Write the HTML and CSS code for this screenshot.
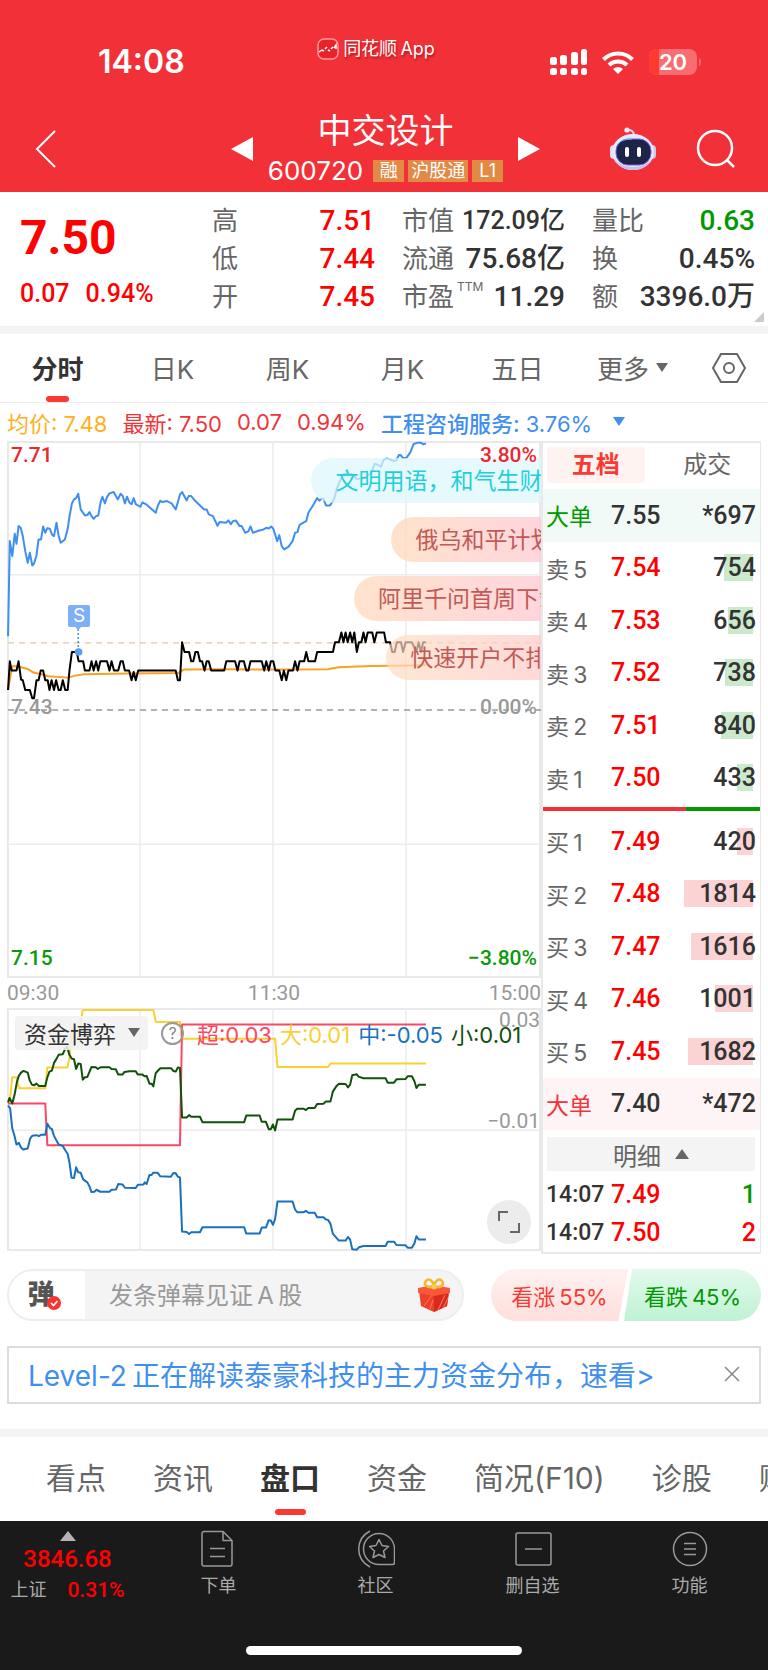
FILE: index.html
```html
<!DOCTYPE html>
<html lang="zh-CN">
<head>
<meta charset="utf-8">
<meta name="viewport" content="width=device-width, initial-scale=1">
<title>中交设计 600720</title>
<link rel="stylesheet" href="styles.css">
</head>
<body>
<header class="top">
  <div class="status">
    <span class="clock">14:08</span>
    <span class="brand">
      <svg width="22" height="22" viewBox="0 0 22 22"><rect x="1" y="1" width="20" height="20" rx="6" fill="#e8232c" stroke="#f99" stroke-width="1.5"/><path d="M2 14l3-2 2 1M8 11l2-2M11 12l2 1M14 11l2-2M17 10l2-3v4" fill="none" stroke="#fff" stroke-width="1.5"/></svg>
      同花顺&#8201;App
    </span>
    <span class="signals">
      <svg width="38" height="28" viewBox="0 0 38 28" fill="#fff"><rect x="0" y="9" width="7" height="8" rx="2.500"/><rect x="10" y="7" width="7" height="10" rx="2.500"/><rect x="21" y="4" width="7" height="13" rx="2.500"/><rect x="31" y="1" width="6" height="16" rx="2.500"/><rect x="0" y="20" width="7" height="7" rx="2.500"/><rect x="10" y="20" width="7" height="7" rx="2.500"/><rect x="21" y="20" width="7" height="7" rx="2.500"/><rect x="31" y="20" width="6" height="7" rx="2.500"/></svg>
      <svg width="32" height="26" viewBox="0 0 32 26"><g fill="none" stroke="#fff" stroke-width="4"><path d="M1.500 10.500a20.500 20.500 0 0 1 29 0"/><path d="M7 16a13 13 0 0 1 18 0"/></g><path d="M16 25l-5-5q5-4 10 0z" fill="#fff"/></svg>
      <svg width="54" height="28" viewBox="0 0 54 28"><defs><clipPath id="cell"><rect x="1" y="1" width="48" height="26" rx="8"/></clipPath></defs><g clip-path="url(#cell)"><rect x="1" y="1" width="48" height="26" fill="#f66d72"/><rect x="1" y="1" width="10" height="26" fill="#ff3b30"/></g><path d="M51 10q2 1 2 4t-2 4z" fill="#f66d72"/><text class="charge" x="25" y="22" text-anchor="middle">20</text></svg>
    </span>
  </div>
  <nav class="title-bar">
    <button class="icon-btn" aria-label="返回"><svg width="22" height="40" viewBox="0 0 22 40"><path d="M20 2L2 20l18 18" fill="none" stroke="#fff" stroke-width="2"/></svg></button>
    <div class="switcher">
      <button class="icon-btn" aria-label="上一只"><svg width="22" height="24" viewBox="0 0 22 24"><path d="M22 0v24L0 12z" fill="#fff"/></svg></button>
      <div class="stock">
        <h1>中交设计</h1>
        <div class="code"><span class="num">600720</span><span class="tag">融</span><span class="tag">沪股通</span><span class="tag">L1</span></div>
      </div>
      <button class="icon-btn" aria-label="下一只"><svg width="22" height="24" viewBox="0 0 22 24"><path d="M0 0v24l22-12z" fill="#fff"/></svg></button>
    </div>
    <div class="tools">
      <button class="icon-btn" aria-label="智能助手"><svg width="46" height="44" viewBox="0 0 46 44"><path d="M16 3q8-1 8 6" fill="none" stroke="#dcdcf6" stroke-width="2"/><circle cx="17" cy="3" r="2.600" fill="#eeeefc"/><rect x="0" y="18" width="8" height="14" rx="4" fill="#dcdcf6"/><rect x="38" y="18" width="8" height="14" rx="4" fill="#c9c9ee"/><ellipse cx="23" cy="25" rx="21" ry="18" fill="#e8e8fa"/><path d="M4 31q5 12 19 12t19-12q-6 9-19 9T4 31z" fill="#c4c1ea"/><rect x="6" y="12" width="35" height="26" rx="12" fill="#1c2547" stroke="#7a5bea" stroke-width="1"/><path d="M8 17q3-5 14-5" fill="none" stroke="#62c6f2" stroke-width="1"/><rect x="15" y="20" width="4" height="10" rx="2" fill="#fff"/><rect x="27" y="20" width="4" height="10" rx="2" fill="#fff"/></svg></button>
      <button class="icon-btn" aria-label="搜索"><svg width="40" height="40" viewBox="0 0 40 40" fill="none" stroke="#fff" stroke-width="2.500"><circle cx="19" cy="19" r="17"/><path d="M31 31l7 7"/></svg></button>
    </div>
  </nav>
</header>

<main>
  <section class="quote">
    <div class="price"><strong>7.50</strong><div class="change"><span>0.07</span><span>0.94%</span></div></div>
    <dl><div><dt>高</dt><dd class="up">7.51</dd></div><div><dt>低</dt><dd class="up">7.44</dd></div><div><dt>开</dt><dd class="up">7.45</dd></div></dl>
    <dl><div><dt>市值</dt><dd class="compact">172.09亿</dd></div><div><dt>流通</dt><dd>75.68亿</dd></div><div><dt>市盈<sup>TTM</sup></dt><dd>11.29</dd></div></dl>
    <dl><div><dt>量比</dt><dd class="down">0.63</dd></div><div><dt>换</dt><dd>0.45%</dd></div><div><dt>额</dt><dd>3396.0万</dd></div></dl>
    <svg class="corner" width="10" height="10" viewBox="0 0 10 10"><path d="M10 0v10H0z" fill="#ccc"/></svg>
  </section>

  <nav class="periods">
    <button class="on">分时</button><button>日K</button><button>周K</button><button>月K</button><button>五日</button>
    <button>更多<svg width="12" height="10" viewBox="0 0 12 10"><path d="M0 0h12L6 9z" fill="#666"/></svg></button>
    <button class="gear" aria-label="设置"><svg width="34" height="30" viewBox="0 0 34 30" fill="none" stroke="#666" stroke-width="2"><path d="M9 1h16l8 14-8 14H9L1 15z"/><circle cx="17" cy="15" r="5"/></svg></button>
  </nav>

  <div class="legend">
    <span class="avg">均价: 7.48</span><span class="last">最新: 7.50</span><span class="last">0.07</span><span class="last">0.94%</span><span class="sector"><b>工程咨询服务:</b> 3.76%</span>
    <svg width="12" height="10" viewBox="0 0 12 10"><path d="M0 0h12L6 9z" fill="#3f8ff0"/></svg>
  </div>

  <section class="board">
    <div class="charts">
      <div class="plot minute">
        <svg class="canvas" viewBox="21 35 1522 1609" preserveAspectRatio="none">
          <g class="grid"><path d="M400 35V1644M779 35V1644M1158 35V1644M21 436H1543M21 1243H1543"/></g>
          <path class="dash tan" d="M24 640H1543"/>
          <path class="dash mid" d="M24 841H1543"/>
          <polyline class="ln orange" points="24,780 36,710 50,710 80,718 95,728 140,740 195,744 215,738 240,734 370,732 510,730 525,720 640,719 800,720 935,719 965,713 1060,709 1215,707"/>
          <polyline class="ln blue" points="24,620 29,335 36,380 43,313 48,343 54,290 60,295 66,320 73,365 80,400 86,370 93,408 98,402 105,378 111,330 118,330 124,291 130,310 136,296 143,298 149,315 155,320 162,280 168,318 174,340 186,330 194,298 199,262 206,222 212,210 218,206 224,193 231,240 243,258 250,257 256,248 262,260 268,268 275,260 281,258 288,218 293,202 300,222 306,203 313,192 325,188 337,210 345,193 351,200 357,222 363,202 370,220 376,224 382,206 388,224 401,232 407,219 419,226 432,238 445,250 451,228 458,214 464,218 477,215 490,222 502,240 508,218 514,195 520,188 533,213 539,200 546,200 558,215 571,228 583,240 590,240 596,255 608,260 621,289 627,278 645,280 652,273 659,284 665,275 673,273 684,290 690,290 700,310 709,306 715,291 722,310 740,303 752,300 760,295 767,297 774,291 780,298 791,335 797,317 804,350 811,360 823,352 835,335 842,310 849,308 855,286 868,278 874,275 880,250 893,228 905,206 911,214 917,208 923,208 930,228 942,228 950,215 956,200 962,175 970,155 982,133 1003,134 1018,148 1035,148 1060,130 1069,103 1075,105 1087,112 1094,92 1104,87 1124,95 1131,92 1138,77 1144,78 1150,87 1160,85 1170,70 1180,44 1192,40 1200,40 1208,45 1215,42"/>
          <polyline class="ln black" points="24,781 29,695 34,723 48,723 54,695 61,750 66,752 73,781 86,781 93,806 98,806 105,752 111,752 117,723 124,723 130,752 137,752 142,781 148,752 155,781 161,752 168,781 174,781 180,752 187,781 194,781 199,723 206,667 220,667 225,695 238,695 243,723 256,723 262,695 268,723 275,695 281,723 287,695 306,695 313,723 319,695 326,723 338,723 345,695 351,695 357,723 369,723 376,752 382,727 388,752 395,723 502,723 508,752 514,752 520,638 527,667 540,667 546,695 552,695 558,667 565,667 571,695 577,695 584,723 590,695 596,695 603,723 640,723 646,695 671,695 678,723 684,695 696,695 703,723 709,723 715,695 747,695 754,723 760,695 767,723 773,695 780,695 786,723 797,723 804,752 810,723 817,752 823,723 836,723 842,695 849,723 855,695 868,695 874,667 880,695 899,695 905,667 950,667 956,638 967,638 974,609 980,638 986,609 992,638 999,609 1005,638 1011,609 1018,667 1024,638 1031,638 1037,609 1043,638 1049,609 1062,609 1068,638 1075,609 1096,609 1101,638 1113,638 1119,667 1126,667 1132,638 1144,638 1150,667 1157,638 1175,638 1188,667 1194,638 1201,667 1207,638 1215,638"/>
          <path class="pin" d="M224 598V660"/>
          <path d="M214 590h20l-10 12z" fill="#7db0f4"/>
          <ellipse cx="225" cy="667" rx="11" ry="11" fill="#5b9df2"/>
        </svg>
        <span class="marker">S</span>
        <div class="bullets">
          <span class="bullet cyan">文明用语，和气生财</span>
          <span class="bullet b2">俄乌和平计划</span>
          <span class="bullet b3">阿里千问首周下载</span>
          <span class="bullet b4">快速开户不排队</span>
        </div>
        <div class="axis">
          <div class="pair red"><span>7.71</span><span>3.80%</span></div>
          <div class="pair gray"><span>7.43</span><span>0.00%</span></div>
          <div class="pair green"><span>7.15</span><span>−3.80%</span></div>
        </div>
      </div>
      <div class="times"><span>09:30</span><span>11:30</span><span>15:00</span></div>
      <div class="plot funds">
        <svg class="canvas" viewBox="21 88 1522 726" preserveAspectRatio="none">
          <g class="grid"><path d="M400 88V814M779 88V814M1158 88V814M21 453H1543"/></g>
          <polyline class="ln yellow" points="24,373 30,355 36,295 48,295 55,328 130,328 136,266 193,266 199,235 206,155 228,155 237,94 438,94 445,130 514,130 520,180 785,180 792,264 936,264 943,254 1215,254"/>
          <polyline class="ln pink" points="24,373 130,373 136,498 514,498 520,137 1215,137"/>
          <polyline class="ln dark" points="24,370 28,357 36,373 43,345 49,310 55,290 61,281 68,276 80,281 86,305 92,317 98,319 105,314 112,321 130,321 136,295 142,278 149,275 155,252 162,240 168,228 180,226 186,212 192,203 199,228 205,239 212,241 218,270 224,254 231,255 237,302 243,295 250,294 262,264 274,265 280,270 288,265 313,265 319,270 331,271 338,287 350,287 356,279 370,277 388,277 394,287 407,287 413,292 419,291 427,314 433,314 438,322 445,282 458,268 489,268 495,276 502,278 508,266 514,267 520,415 533,415 540,408 546,413 571,413 578,429 697,429 703,409 741,409 747,428 759,428 767,450 773,450 779,436 785,454 792,421 835,421 842,395 848,389 867,389 873,393 880,387 898,387 905,375 923,374 930,367 943,367 950,337 961,320 968,314 986,315 993,325 999,317 1005,289 1018,286 1023,293 1037,298 1100,298 1106,311 1124,311 1131,301 1157,300 1163,292 1175,292 1182,306 1188,327 1195,317 1215,317"/>
          <polyline class="ln navy" points="24,380 30,388 36,448 42,468 48,496 55,491 61,505 67,511 80,508 87,478 93,470 105,468 112,471 118,467 130,467 136,434 143,446 149,450 155,470 168,496 180,500 187,513 194,524 199,550 205,595 212,596 218,564 224,579 231,580 238,600 250,609 256,621 262,638 270,637 276,631 287,637 313,637 319,631 332,630 338,614 350,615 357,625 388,626 394,616 410,615 414,609 419,614 427,587 433,587 438,580 450,580 458,591 488,592 495,581 502,582 508,592 514,594 520,756 533,757 540,763 546,758 571,758 578,743 697,743 703,762 741,762 747,744 759,744 767,722 773,723 779,736 785,719 792,666 835,666 842,690 848,698 867,698 873,694 880,700 898,700 905,713 923,713 930,720 936,721 943,733 950,763 967,783 986,783 993,772 999,780 1005,809 1018,810 1024,803 1037,799 1100,799 1106,786 1124,786 1131,796 1157,797 1163,804 1175,804 1182,792 1188,770 1195,780 1215,780"/>
        </svg>
        <div class="fund-bar">
          <button class="picker">资金博弈<svg width="12" height="10" viewBox="0 0 12 10"><path d="M0 0h12L6 9z" fill="#666"/></svg></button>
          <button class="help" aria-label="说明">?</button>
          <span class="c-pink">超:0.03</span><span class="c-yellow">大:0.01</span><span class="c-blue">中:-0.05</span><span class="c-dark">小:0.01</span>
        </div>
        <div class="fund-axis"><span>0.03</span><span>−0.01</span></div>
        <button class="expand" aria-label="全屏"><svg width="24" height="24" viewBox="0 0 24 24" fill="none" stroke="#666" stroke-width="2"><path d="M2 11V2h9M22 13v9h-9"/></svg></button>
      </div>
    </div>

    <aside class="book">
      <div class="book-tabs"><button class="on">五档</button><button>成交</button></div>
      <table class="levels sell">
        <tr class="big"><th>大单</th><td class="p">7.55</td><td class="v">*697</td></tr>
        <tr><th>卖&#8201;5</th><td class="p">7.54</td><td class="v" style="--w:29px">754</td></tr>
        <tr><th>卖&#8201;4</th><td class="p">7.53</td><td class="v" style="--w:25px">656</td></tr>
        <tr><th>卖&#8201;3</th><td class="p">7.52</td><td class="v" style="--w:28px">738</td></tr>
        <tr><th>卖&#8201;2</th><td class="p">7.51</td><td class="v" style="--w:32px">840</td></tr>
        <tr><th>卖&#8201;1</th><td class="p">7.50</td><td class="v" style="--w:16px">433</td></tr>
      </table>
      <div class="ratio"></div>
      <table class="levels buy">
        <tr><th>买&#8201;1</th><td class="p">7.49</td><td class="v" style="--w:16px">420</td></tr>
        <tr><th>买&#8201;2</th><td class="p">7.48</td><td class="v" style="--w:69px">1814</td></tr>
        <tr><th>买&#8201;3</th><td class="p">7.47</td><td class="v" style="--w:62px">1616</td></tr>
        <tr><th>买&#8201;4</th><td class="p">7.46</td><td class="v" style="--w:38px">1001</td></tr>
        <tr><th>买&#8201;5</th><td class="p">7.45</td><td class="v" style="--w:65px">1682</td></tr>
        <tr class="big"><th>大单</th><td class="p">7.40</td><td class="v">*472</td></tr>
      </table>
      <button class="detail">明细<svg width="14" height="10" viewBox="0 0 14 10"><path d="M0 10h14L7 0z" fill="#666"/></svg></button>
      <table class="ticks">
        <tr><td class="t">14:07</td><td class="p">7.49</td><td class="v down">1</td></tr>
        <tr><td class="t">14:07</td><td class="p">7.50</td><td class="v up">2</td></tr>
      </table>
    </aside>
  </section>

  <section class="social">
    <div class="comment">
      <button class="toggle" aria-label="弹幕开关">弹<svg width="14" height="14" viewBox="0 0 14 14"><circle cx="7" cy="7" r="7" fill="#f5362f"/><path d="M4 7l2.500 2.500L10.500 5" fill="none" stroke="#fff" stroke-width="1.700"/></svg></button>
      <input type="text" aria-label="弹幕" placeholder="发条弹幕见证&#8201;A&#8201;股">
      <button class="icon-btn" aria-label="礼物"><svg width="32" height="34" viewBox="0 0 32 34"><path d="M1 12h30l-2 16-13 6-13-6z" fill="#ee3f2a"/><path d="M16 16v18l13-6 2-14z" fill="#d92b1d"/><path d="M0 10l16-3 16 3v5l-16 3-16-3z" fill="#f9573a"/><path d="M6 28l8-11M12 31l3-9M20 32l7-15M25 30l5-10" stroke="#ff7a55" stroke-width="1"/><path d="M16 9C9 10 5 7 8 3s8 1 8 6zM16 9c7 1 11-2 8-6s-8 1-8 6z" fill="none" stroke="#f7b530" stroke-width="2.600"/><circle cx="16" cy="9" r="2.500" fill="#fbd056"/></svg></button>
    </div>
    <div class="vote"><button class="bull">看涨&#8201;55%</button><button class="bear">看跌&#8201;45%</button></div>
  </section>

  <section class="promo">
    <a href="#">Level-2&#8201;正在解读泰豪科技的主力资金分布，速看&gt;</a>
    <button class="icon-btn" aria-label="关闭"><svg width="16" height="16" viewBox="0 0 16 16"><path d="M1 1l14 14M15 1L1 15" stroke="#888" stroke-width="1.500"/></svg></button>
  </section>

  <nav class="sections">
    <a href="#">看点</a><a href="#">资讯</a><a href="#" class="on">盘口</a><a href="#">资金</a><a href="#">简况(F10)</a><a href="#">诊股</a><a href="#">财务</a>
  </nav>
</main>

<footer class="bottom">
  <div class="bar">
    <a href="#" class="index">
      <svg width="16" height="10" viewBox="0 0 16 10"><path d="M0 10h16L8 0z" fill="#b4b4b4"/></svg>
      <strong>3846.68</strong>
      <span class="index-row"><span>上证</span><b>0.31%</b></span>
    </a>
    <a href="#" class="act"><svg width="38" height="38" viewBox="0 0 38 38"><path d="M4 1.500h19l9 9V34a2 2 0 0 1-2 2H4a2 2 0 0 1-2-2V3.500a2 2 0 0 1 2-2zM23 1.500v9h9M10 18.500h15M10 26.500h15"/></svg>下单</a>
    <a href="#" class="act"><svg width="38" height="38" viewBox="0 0 38 38"><path d="M22 34.500a15.500 15.500 0 1 1 15.500-15.500v13.500a2 2 0 0 1-2 2zM13 1C-2 9-2 29 13 37M22 9.500l3 6 6.500 1-5 4.500 1.500 6.500-6-3-6 3 1.500-6.500-5-4.500 6.500-1z"/></svg>社区</a>
    <a href="#" class="act"><svg width="38" height="38" viewBox="0 0 38 38"><rect x="2" y="3" width="35" height="32" rx="2"/><path d="M11 19h17"/></svg>删自选</a>
    <a href="#" class="act"><svg width="38" height="38" viewBox="0 0 38 38"><circle cx="19" cy="19" r="16.500"/><path d="M13 13.500h12M13 19h12M13 24.500h12"/></svg>功能</a>
  </div>
  <div class="home"></div>
</footer>
</body>
</html>
```

FILE: styles.css
```css
* { box-sizing: border-box; }
body { margin: 0; background: #fff; color: #333; font-family: Inter, "Noto Sans CJK SC", sans-serif; overflow-x: hidden; }
button { border: 0; background: none; padding: 0; margin: 0; font: inherit; color: inherit; }
a { color: inherit; text-decoration: none; }
svg { display: block; flex: none; }
.icon-btn { display: flex; align-items: center; justify-content: center; }
.up { color: #f00; }
.down { color: #090; }

/* header */
.top { background: #f23038; color: #fff; height: 192px; }
.status { display: grid; grid-template-columns: 1fr auto 1fr; height: 104px; padding: 0 66px 0 50px; }
.clock { font-size: 32px; font-weight: 600; line-height: 36px; padding: 44px 0 0 48px; }
.brand { display: flex; gap: 4px; align-items: center; font-size: 18px; line-height: 24px; height: 24px; margin-top: 37px; text-shadow: 1px 2px 2px #8008; }
.signals { display: flex; gap: 14px; align-items: center; justify-content: flex-end; height: 28px; margin-top: 48px; }
.charge { font: 600 22px Inter, sans-serif; fill: #fff; }
.title-bar { display: grid; grid-template-columns: 1fr auto 1fr; align-items: center; padding: 2px 32px 0 35px; height: 88px; }
.title-bar > .icon-btn { justify-self: start; }
.switcher { display: flex; align-items: center; gap: 15px; }
.stock { text-align: center; }
.stock h1 { margin: 0; font-size: 34px; font-weight: 400; line-height: 44px; }
.code { display: flex; gap: 4px; align-items: center; font-size: 26px; line-height: 36px; }
.num { margin-right: 6px; }
.tag { background: #e18a46; font-size: 18px; line-height: 22px; min-width: 31px; padding: 0 3px; }
.tools { display: flex; gap: 40px; justify-self: end; }

/* quote */
.quote { position: relative; display: grid; grid-template-columns: 165px 1fr 1fr 1fr; gap: 27px; padding: 10px 13px 10px 20px; height: 134px; }
.price { color: #f00; font-family: Roboto, sans-serif; font-weight: 500; }
.price strong { display: block; font-size: 48px; font-weight: 700; line-height: 72px; margin-bottom: 4px; }
.change { display: flex; gap: 16px; font-size: 25px; line-height: 32px; }
.quote dl { margin: 0; }
.quote dl div { display: flex; justify-content: space-between; align-items: center; height: 38px; white-space: nowrap; }
.quote dt { color: #666; font-size: 26px; line-height: 38px; display: flex; }
.quote dd { margin: 0; font: 500 28px/38px Roboto, "Noto Sans CJK SC", sans-serif; }
.quote .compact { font-size: 25px; }
.quote sup { font-size: 12px; line-height: 18px; margin-left: 3px; }
.corner { position: absolute; right: 4px; bottom: 4px; }

/* period tabs */
.periods { display: flex; border-top: 8px solid #f4f4f4; border-bottom: 1px solid #eee; height: 77px; color: #666; font-size: 26px; }
.periods button { flex: 115; display: flex; align-items: center; justify-content: center; gap: 7px; padding-bottom: 1px; }
.periods .gear { flex: 78; }
.periods .on { position: relative; color: #333; font-weight: 700; }
.periods .on::after { content: ""; position: absolute; bottom: 0; width: 23px; height: 6px; border-radius: 3px; background: #fa3a32; }

.legend { display: flex; align-items: center; gap: 15px; padding: 0 7px; height: 38px; font-size: 22px; white-space: nowrap; }
.legend svg { margin-left: 6px; }
.avg { color: #fdb11c; }
.last { color: #f0353a; }
.sector { color: #3f8ff0; }
.sector b { font-weight: 500; }

/* charts */
.board { display: flex; padding: 0 7px; }
.charts { flex: 1; min-width: 0; }
.plot { position: relative; box-shadow: inset 0 0 0 2px #e9e9e9; overflow: hidden; }
.minute { height: 537px; }
.funds { height: 243px; }
.canvas { display: block; width: 100%; height: 100%; }
.canvas * { vector-effect: non-scaling-stroke; }
.grid { fill: none; stroke: #ececec; stroke-width: 1.5; }
.ln { fill: none; stroke-width: 2; stroke-linejoin: round; }
.orange { stroke: #fba11d; }
.blue { stroke: #3f8ff0; }
.black { stroke: #000; }
.yellow { stroke: #fccf35; }
.pink { stroke: #fb4764; }
.dark { stroke: #11500c; }
.navy { stroke: #1b70bd; }
.dash { fill: none; stroke-dasharray: 6 5; }
.tan { stroke: #dcb98c; }
.mid { stroke: #999; stroke-width: 1.5; }
.pin { stroke: #3f8ff0; stroke-width: 1.5; stroke-dasharray: 2 2; }
.marker { position: absolute; left: 61px; top: 164px; width: 22px; height: 22px; border-radius: 2px; background: #7db0f4; color: #fff; font-size: 19px; line-height: 22px; text-align: center; }
.bullets { position: absolute; inset: 17px 0 auto; display: flex; flex-direction: column; gap: 14px; }
.bullet { margin-left: 57%; padding-left: 24px; border-radius: 23px 0 0 23px; height: 45px; font-size: 23px; line-height: 46px; white-space: nowrap; overflow: hidden; color: #c05a58; background: linear-gradient(90deg, #ffdcc0cc, #ffcbd3cc); }
.cyan { color: #1fcfdc; background: #ddf7fbb8; }
.b2 { margin-left: 72%; }
.b3 { margin-left: 65%; }
.b4 { margin-left: 71%; background: linear-gradient(90deg, #ffdcc0b0, #ffcbc9b8); }
.axis { position: absolute; inset: 1px 4px 7px; display: flex; flex-direction: column; justify-content: space-between; font: 500 21px/26px Roboto, sans-serif; }
.pair { display: flex; justify-content: space-between; }
.red { color: #e9282e; }
.gray { color: #999; }
.green { color: #0b990b; }
.times { display: flex; justify-content: space-between; color: #999; font: 400 21px/30px Roboto, sans-serif; }
.fund-bar { position: absolute; inset: 8px 0 auto 8px; display: flex; align-items: center; gap: 8px; font-size: 22px; white-space: nowrap; }
.picker { display: flex; align-items: center; gap: 12px; height: 34px; padding: 0 8px 0 9px; border-radius: 4px; background: #f1f1f1dd; color: #333; font-size: 23px; }
.help { width: 23px; height: 23px; margin: 0 5px; border: 2px solid #999; border-radius: 50%; color: #888; font-size: 16px; line-height: 18px; }
.c-pink { color: #fb4764; }
.c-yellow { color: #fccf35; }
.c-blue { color: #1b70bd; }
.c-dark { color: #11500c; }
.fund-axis { position: absolute; inset: 1px 1px auto auto; display: flex; flex-direction: column; gap: 79px; align-items: flex-end; color: #999; font: 400 21px/22px Roboto, sans-serif; }
.expand { position: absolute; right: 10px; bottom: 7px; width: 44px; height: 44px; border-radius: 50%; background: #ececec; display: flex; align-items: center; justify-content: center; }

/* order book */
.book { flex: none; width: 220px; border: 1px solid #e9e9e9; border-width: 2px 1px 2px 2px; }
.book-tabs { display: flex; padding: 4px; height: 46px; font-size: 24px; color: #666; }
.book-tabs button { flex: 1; border-radius: 4px; line-height: 36px; height: 36px; }
.book-tabs button + button { margin-left: 14px; }
.book-tabs .on { background: #fff3f2; color: #fa3a32; font-weight: 700; }
table { width: 100%; border-collapse: collapse; table-layout: fixed; }
th, td { padding: 0; font-weight: 500; text-align: left; white-space: nowrap; }
.levels { height: 315px; }
.levels th { width: 68px; padding-left: 3px; font-weight: 400; font-size: 23px; color: #666; }
.p, .v, .t { font-family: Roboto, sans-serif; font-size: 25px; }
.p { width: 60px; color: #f00; }
.v { text-align: right; padding-right: 4px; }
.levels .v { background: linear-gradient(#cbeacb, #cbeacb) no-repeat right 7px center / var(--w, 0) 27px; }
.levels.buy .v { background-image: linear-gradient(#fbd3d5, #fbd3d5); }
.levels .big .p { color: #333; }
.levels .big .v { background: none; }
.sell .big { background: #f1faf6; }
.sell .big th { color: #090; }
.buy .big { background: #fff4f5; }
.buy .big th { color: #f0353a; }
.ratio { height: 4px; margin: 3px 0 4px; background: linear-gradient(90deg, #f22f34 66%, #090 66%); }
.detail { display: flex; align-items: center; justify-content: center; gap: 14px; width: calc(100% - 9px); margin: 7px 5px 5px 4px; height: 34px; background: #f4f4f4; color: #666; font-size: 24px; }
.ticks td { height: 38px; line-height: 38px; }
.ticks .t { width: 68px; padding-left: 3px; font-size: 23px; }

/* comment and vote */
.social { display: flex; gap: 27px; padding: 15px 7px 25px; height: 92px; }
.comment { flex: 1; min-width: 0; display: flex; align-items: center; border: 2px solid #eee; border-radius: 27px; background: #f4f4f4; overflow: hidden; padding-right: 12px; }
.toggle { position: relative; flex: none; width: 76px; height: 100%; padding-right: 12px; background: #fff; color: #555; font-size: 27px; font-weight: 900; line-height: 46px; }
.toggle svg { position: absolute; left: 38px; top: 25px; }
.comment input { flex: 1; min-width: 0; border: 0; background: none; padding: 0 0 0 24px; font: inherit; font-size: 24px; color: #333; outline: 0; }
.comment input::placeholder { color: #999; opacity: 1; }
.vote { flex: none; width: 270px; display: flex; font-size: 22px; }
.vote button { flex: 1; white-space: nowrap; }
.bull { color: #fa3a32; border-radius: 27px 0 0 27px; background: linear-gradient(#fff1f0, #ffdfdc); clip-path: polygon(0 0, 100% 0, 93% 100%, 0 100%); }
.bear { color: #090; border-radius: 0 27px 27px 0; background: linear-gradient(#e2faec, #bff2d3); clip-path: polygon(6% 0, 100% 0, 100% 100%, 0 100%); margin-left: -4px; }

.promo { display: flex; align-items: center; justify-content: space-between; margin: 0 7px 25px; padding: 0 19px 2px; height: 58px; border: 2px solid #ddd; color: #3f8ff0; font-size: 28px; white-space: nowrap; }

.sections { display: flex; gap: 47px; border-top: 8px solid #f4f4f4; height: 92px; padding-left: 46px; overflow: hidden; font-size: 30px; line-height: 82px; color: #666; white-space: nowrap; }
.sections .on { position: relative; color: #333; font-weight: 700; }
.sections .on::after { content: ""; position: absolute; left: 15px; bottom: 6px; width: 31px; height: 6px; border-radius: 3px; background: #fa3a32; }

/* bottom bar */
.bottom { background: #1a1a1a; color: #aaa; height: 150px; display: flex; flex-direction: column; justify-content: space-between; align-items: center; padding-bottom: 16px; }
.bar { display: flex; width: 100%; }
.index { width: 140px; padding: 10px 5px 0 0; display: flex; flex-direction: column; align-items: center; font-size: 18px; }
.index strong, .index b { color: #f00; font-family: Roboto, sans-serif; font-weight: 500; }
.index strong { font-size: 24px; line-height: 36px; }
.index b { font-size: 21px; }
.index-row { display: flex; gap: 21px; align-items: center; line-height: 26px; }
.act { flex: 1; display: flex; flex-direction: column; align-items: center; padding-top: 9px; font-size: 18px; line-height: 36px; }
.act svg { fill: none; stroke: #999; stroke-width: 1.5; stroke-linejoin: round; }
.home { width: 36%; height: 9px; border-radius: 5px; background: #fff; }
```
